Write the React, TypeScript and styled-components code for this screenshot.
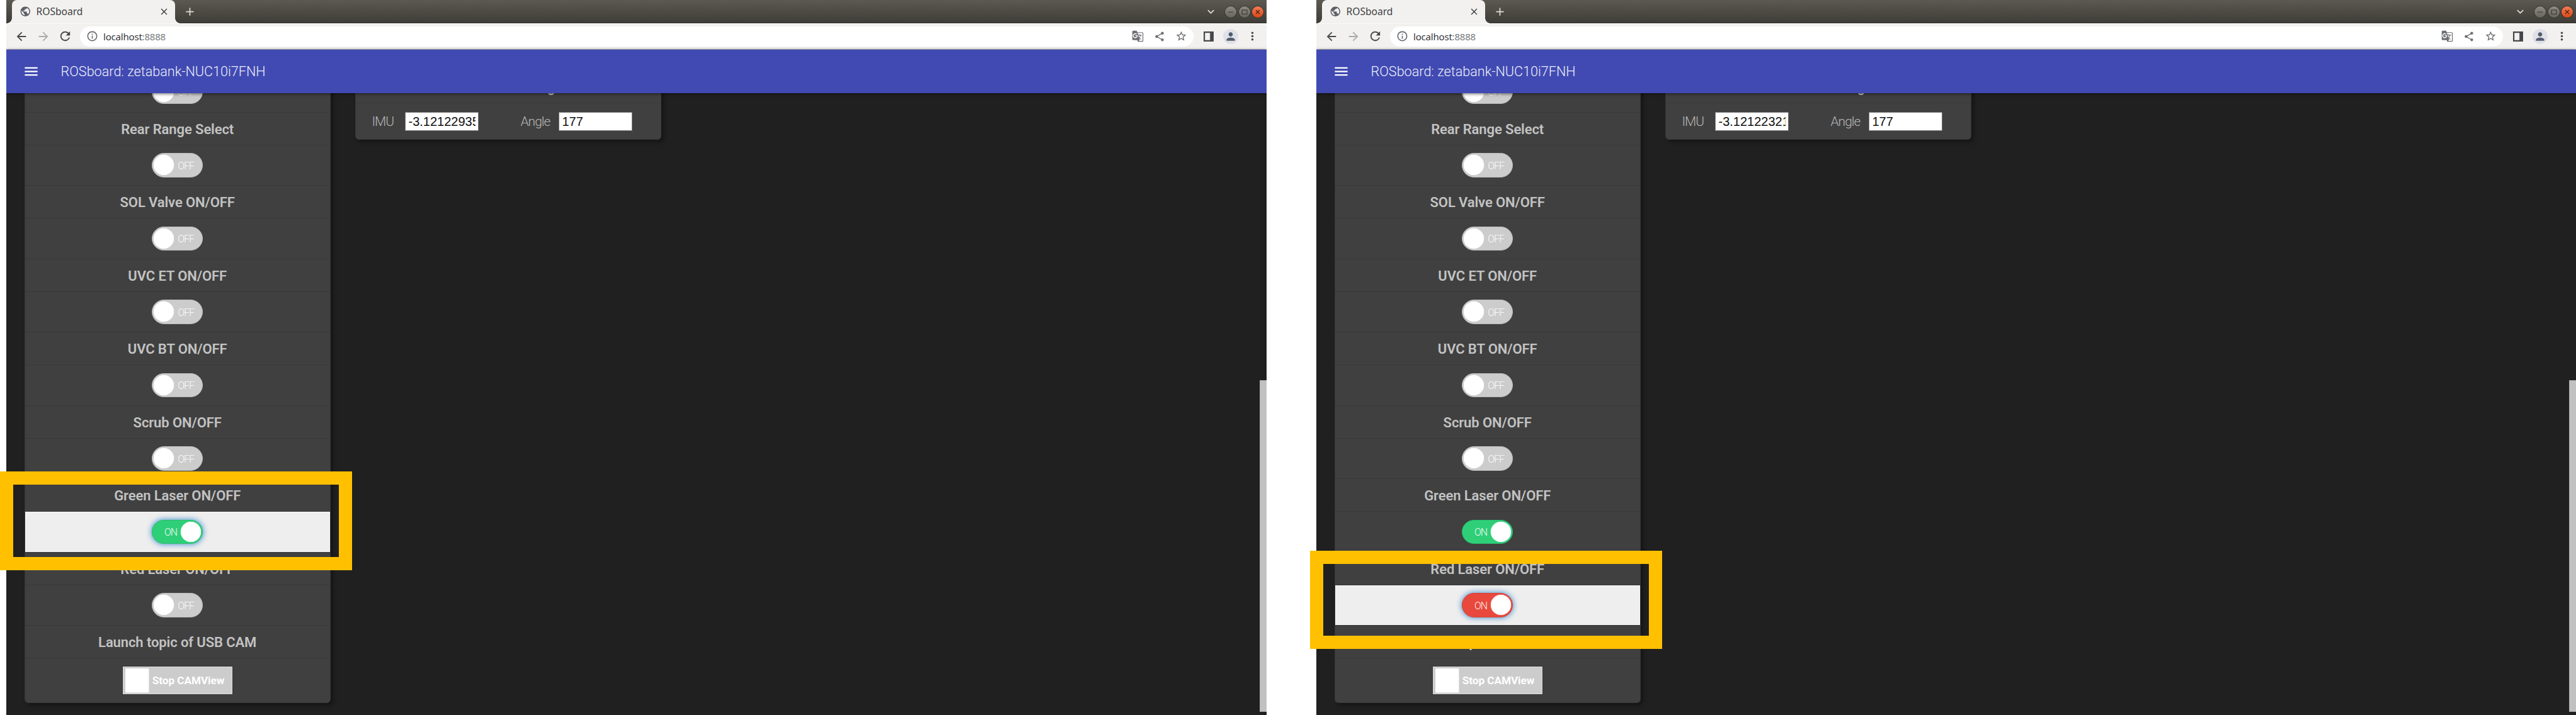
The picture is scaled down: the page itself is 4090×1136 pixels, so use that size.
import React from "react";
import styled, { createGlobalStyle, css } from "styled-components";
import {
  MdAdd,
  MdArrowBack,
  MdArrowForward,
  MdClose,
  MdExpandMore,
  MdGTranslate,
  MdInfoOutline,
  MdMenu,
  MdMoreVert,
  MdPerson,
  MdPublic,
  MdRefresh,
  MdShare,
  MdStarOutline,
} from "react-icons/md";

const GlobalStyle = createGlobalStyle`
  body { margin: 0; background: #fff; }
  * { box-sizing: border-box; }
`;

const Page = styled.main`
  position: relative;
  display: flex;
  gap: 79px;
  width: 4090px;
  height: 1136px;
  padding-left: 10px;
  overflow: hidden;
  background: #fff;
  font-family: Roboto, "Liberation Sans", sans-serif;
`;

const Window = styled.section<{ $width: number }>`
  display: flex;
  flex-direction: column;
  flex: none;
  width: ${(p) => p.$width}px;
  height: 1136px;
  overflow: hidden;
  background: #202020;
`;

/* ---- browser chrome ---- */

const TabStrip = styled.div`
  display: flex;
  align-items: center;
  flex: none;
  height: 37px;
  padding: 0 5px 0 9px;
  background: linear-gradient(#5c5950, #3f3e39 35px, #33322e);
  color: #dfdbd2;
`;

const Tab = styled.div`
  position: relative;
  display: flex;
  align-items: center;
  width: 259px;
  height: 37px;
  padding: 0 9px 1px 12px;
  border-radius: 8px 8px 0 0;
  background: #f2f1ef;
  color: #5b5f66;
  &::before,
  &::after {
    content: "";
    position: absolute;
    bottom: 0;
    width: 8px;
    height: 8px;
  }
  &::before {
    right: 100%;
    background: radial-gradient(circle at 0 0, transparent 7.5px, #f2f1ef 8px);
  }
  &::after {
    left: 100%;
    background: radial-gradient(circle at 100% 0, transparent 7.5px, #f2f1ef 8px);
  }
`;

const TabTitle = styled.span`
  flex: 1;
  margin-left: 8px;
  color: #3e4043;
  font: 400 15.6px/36px "Noto Sans", sans-serif;
`;

const NewTab = styled.span`
  display: flex;
  flex: 1;
  padding-left: 13px;
`;

const Controls = styled.div`
  display: flex;
  align-items: center;
  gap: 3.3px;
  margin-left: 12.5px;
`;

const Control = styled.span<{ $close?: boolean }>`
  display: flex;
  align-items: center;
  justify-content: center;
  width: 18px;
  height: 18px;
  border-radius: 50%;
  background: ${(p) =>
    p.$close ? "linear-gradient(#f47a55, #dd4814)" : "linear-gradient(#8d8b84, #66645d)"};
  box-shadow: 0 0 0 1px #36352f;
`;

const Toolbar = styled.div`
  display: flex;
  align-items: center;
  flex: none;
  height: 42px;
  padding: 0 5.5px 1px 6.75px;
  border-top: 1px solid #fafafa;
  border-bottom: 1px solid #a7a6b4;
  background: #f2f1ef;
`;

const IconSlot = styled.span<{ $color?: string }>`
  display: flex;
  align-items: center;
  justify-content: center;
  width: 34.6px;
  color: ${(p) => p.$color ?? "#46484b"};
`;

const AddressBar = styled.div`
  display: flex;
  align-items: center;
  flex: 1;
  height: 32px;
  margin: 0 6.5px 0 6.5px;
  padding: 0 2px 0 10px;
  border-radius: 16px;
  background: #fff;
  color: #66696d;
`;

const Address = styled.span`
  flex: 1;
  margin-left: 8px;
  color: #333639;
  font: 400 15px/30px "Noto Sans", sans-serif;
  letter-spacing: -0.2px;
`;

const Port = styled.span`
  color: #777a7e;
`;

const Avatar = styled.span`
  display: flex;
  align-items: center;
  justify-content: center;
  width: 24px;
  height: 24px;
  border-radius: 50%;
  background: #dfe1e6;
  color: #525c70;
`;

/* ---- dashboard ---- */

const AppBar = styled.header`
  position: relative;
  z-index: 1;
  display: flex;
  align-items: center;
  flex: none;
  height: 69px;
  padding-left: 25.5px;
  background: #414ab2;
  box-shadow: 0 1px 5px rgba(0, 0, 0, 0.6);
  color: #fff;
`;

const AppTitle = styled.h1`
  margin: 0 0 0 34px;
  color: #eceefa;
  font-size: 21.6px;
  font-weight: 300;
`;

const Content = styled.div`
  display: flex;
  flex: 1;
  min-height: 0;
  padding-left: 28.7px;
`;

const Column = styled.div`
  display: flex;
  flex-direction: column;
  justify-content: flex-end;
  height: 988px;
  padding-bottom: 19px;
`;

const Card = styled.div`
  display: flex;
  flex-direction: column;
  flex: none;
  width: 486px;
  border: 1px solid #373737;
  border-radius: 6px;
  background: #404040;
  box-shadow: 4px 4px 6px rgba(0, 0, 0, 0.35);
`;

const SensorCard = styled(Card)`
  margin: -37px 0 0 39.8px;
  align-self: flex-start;
`;

const CardTitle = styled.div<{ $shift?: number }>`
  display: flex;
  align-items: center;
  justify-content: center;
  height: 52px;
  padding: 2px 0 0 ${(p) => p.$shift ?? 0}px;
  border-bottom: 1px solid #383838;
  color: #c3c3c3;
  font-size: 22px;
  font-weight: 600;
  letter-spacing: -0.1px;
`;

const SwitchRow = styled.div<{ $highlight?: boolean; $last?: boolean }>`
  display: flex;
  align-items: center;
  justify-content: center;
  height: ${(p) => (p.$last ? 70 : 64.5)}px;
  border-bottom: ${(p) => (p.$last ? "none" : "1px solid #383838")};
  ${(p) =>
    p.$highlight &&
    css`
      background: #eee;
      box-shadow: inset 0 0 0 1px #f8f8f8;
    `}
`;

type Tone = "off" | "green" | "red";
const toneColor: Record<Tone, string> = { off: "#ccc", green: "#2fcf78", red: "#e8493c" };
const toneEdge: Record<Tone, string> = { off: "#bdbdbd", green: "#2bbf6e", red: "#d64337" };

const Switch = styled.div<{ $tone: Tone; $focus?: boolean }>`
  display: flex;
  align-items: center;
  flex-direction: ${(p) => (p.$tone === "off" ? "row" : "row-reverse")};
  gap: 6px;
  width: 81px;
  height: 38.5px;
  padding: 0 2px;
  border: 1px solid ${(p) => toneEdge[p.$tone]};
  border-radius: 20px;
  background: ${(p) => toneColor[p.$tone]};
  box-shadow: ${(p) => (p.$focus ? "0 0 8px 1px rgba(50, 135, 205, 0.85)" : "none")};
`;

const Knob = styled.span`
  width: 32px;
  height: 32px;
  border-radius: 50%;
  background: #fff;
  box-shadow: 0 0 1px #fff;
`;

const SwitchText = styled.span`
  padding-top: 2px;
  color: rgba(255, 255, 255, 0.95);
  font-size: 16px;
  font-weight: 300;
  letter-spacing: -1px;
`;

const SquareSwitch = styled.div`
  display: flex;
  align-items: center;
  gap: 6px;
  width: 174px;
  height: 44px;
  padding: 0 3px;
  border: 1px solid #dcdcdc;
  outline: 1px solid #353535;
  background: #ccc;
  color: #fff;
  font-size: 17.1px;
  font-weight: 700;
`;

const SquareKnob = styled.span`
  width: 37px;
  height: 38px;
  background: #fff;
  box-shadow: 1px 1px 0 #e2e2e2;
`;

const Fields = styled.div`
  display: grid;
  grid-template-columns: 53px 117px 66px 61px 117px;
  align-items: center;
  height: 57px;
  padding-left: 25px;
`;

const Label = styled.label`
  color: #b6b6b6;
  font-size: 21px;
  font-weight: 300;
  letter-spacing: -1px;
`;

const AngleLabel = styled(Label)`
  grid-column: 4;
`;

const Field = styled.div`
  height: 30px;
  padding: 0 4px;
  border: 1px solid #777;
  background: #fff;
  color: #111;
  font: 20px/28px "Liberation Sans", Arial, sans-serif;
`;

const FieldValue = styled.div`
  overflow: hidden;
  white-space: nowrap;
`;

const ScrollThumb = styled.div`
  width: 11px;
  height: 527px;
  margin: 456px 0 0 auto;
  border: 1px solid #a9a9a9;
  border-right: 0;
  background: #c1c1c1;
`;

const Frame = styled.div<{ $x: number; $y: number; $h: number }>`
  position: absolute;
  z-index: 2;
  left: ${(p) => p.$x}px;
  top: ${(p) => p.$y}px;
  width: 559px;
  height: ${(p) => p.$h}px;
  border: 21px solid #ffc000;
`;

const SidePanelIcon = () => (
  <svg width="16" height="16" viewBox="0 0 16 16">
    <path fill="currentColor" fillRule="evenodd" d="M0 0h16v16H0zM2.2 2.2v11.6h8V2.2z" />
  </svg>
);

const MinimizeIcon = () => (
  <svg width="10" height="10" viewBox="0 0 10 10" stroke="#47453f" strokeWidth="1.4">
    <path d="M1 5.3h8" />
  </svg>
);

const MaximizeIcon = () => (
  <svg width="10" height="10" viewBox="0 0 10 10" fill="none" stroke="#47453f" strokeWidth="1.4">
    <rect x="1" y="2" width="8" height="6.4" />
  </svg>
);

const CloseIcon = () => (
  <svg width="10" height="10" viewBox="0 0 10 10" stroke="#4b2a18" strokeWidth="1.5">
    <path d="M2 2l6 6M8 2l-6 6" />
  </svg>
);

type Row = { title: string; tone: Tone; focus?: boolean };

const baseTitles = [
  "Rear Range Select",
  "SOL Valve ON/OFF",
  "UVC ET ON/OFF",
  "UVC BT ON/OFF",
  "Scrub ON/OFF",
];

const offRows: Row[] = baseTitles.map((title) => ({ title, tone: "off" }));

function Toggle({ tone, focus }: { tone: Tone; focus?: boolean }) {
  return (
    <SwitchRow $highlight={focus}>
      <Switch $tone={tone} $focus={focus}>
        <Knob />
        <SwitchText>{tone === "off" ? "OFF" : "ON"}</SwitchText>
      </Switch>
    </SwitchRow>
  );
}

function BrowserWindow({ width, imu, rows }: { width: number; imu: string; rows: Row[] }) {
  return (
    <Window $width={width}>
      <TabStrip>
        <Tab>
          <MdPublic size={18.5} />
          <TabTitle>ROSboard</TabTitle>
          <MdClose size={17} color="#3c3e41" />
        </Tab>
        <NewTab>
          <MdAdd size={21} />
        </NewTab>
        <MdExpandMore size={21} />
        <Controls>
          <Control>
            <MinimizeIcon />
          </Control>
          <Control>
            <MaximizeIcon />
          </Control>
          <Control $close>
            <CloseIcon />
          </Control>
        </Controls>
      </TabStrip>
      <Toolbar>
        <IconSlot>
          <MdArrowBack size={22} />
        </IconSlot>
        <IconSlot $color="#aaa">
          <MdArrowForward size={22} />
        </IconSlot>
        <IconSlot>
          <MdRefresh size={23} />
        </IconSlot>
        <AddressBar>
          <MdInfoOutline size={19} />
          <Address>
            localhost<Port>:8888</Port>
          </Address>
          <IconSlot $color="#6d6f72">
            <MdGTranslate size={19} />
          </IconSlot>
          <IconSlot $color="#6d6f72">
            <MdShare size={18} />
          </IconSlot>
          <IconSlot $color="#66686b">
            <MdStarOutline size={19} />
          </IconSlot>
        </AddressBar>
        <IconSlot>
          <SidePanelIcon />
        </IconSlot>
        <IconSlot>
          <Avatar>
            <MdPerson size={20} />
          </Avatar>
        </IconSlot>
        <IconSlot>
          <MdMoreVert size={21} />
        </IconSlot>
      </Toolbar>
      <AppBar>
        <MdMenu size={27} />
        <AppTitle>ROSboard: zetabank-NUC10i7FNH</AppTitle>
      </AppBar>
      <Content>
        <Column>
          <Card>
            <Toggle tone="off" />
            {rows.map((row) => (
              <React.Fragment key={row.title}>
                <CardTitle>{row.title}</CardTitle>
                <Toggle tone={row.tone} focus={row.focus} />
              </React.Fragment>
            ))}
            <CardTitle>Launch topic of USB CAM</CardTitle>
            <SwitchRow $last>
              <SquareSwitch>
                <SquareKnob />
                Stop CAMView
              </SquareSwitch>
            </SwitchRow>
          </Card>
        </Column>
        <SensorCard>
          <CardTitle $shift={126}>Angle</CardTitle>
          <Fields>
            <Label>IMU</Label>
            <Field>
              <FieldValue>{imu}</FieldValue>
            </Field>
            <AngleLabel>Angle</AngleLabel>
            <Field>
              <FieldValue>177</FieldValue>
            </Field>
          </Fields>
        </SensorCard>
        <ScrollThumb />
      </Content>
    </Window>
  );
}

export default function App() {
  return (
    <Page>
      <GlobalStyle />
      <BrowserWindow
        width={2001}
        imu="-3.12122935"
        rows={[
          ...offRows,
          { title: "Green Laser ON/OFF", tone: "green", focus: true },
          { title: "Red Laser ON/OFF", tone: "off" },
        ]}
      />
      <BrowserWindow
        width={2000}
        imu="-3.12122321"
        rows={[
          ...offRows,
          { title: "Green Laser ON/OFF", tone: "green" },
          { title: "Red Laser ON/OFF", tone: "red", focus: true },
        ]}
      />
      <Frame $x={0} $y={749} $h={157} />
      <Frame $x={2080} $y={875} $h={156} />
    </Page>
  );
}
